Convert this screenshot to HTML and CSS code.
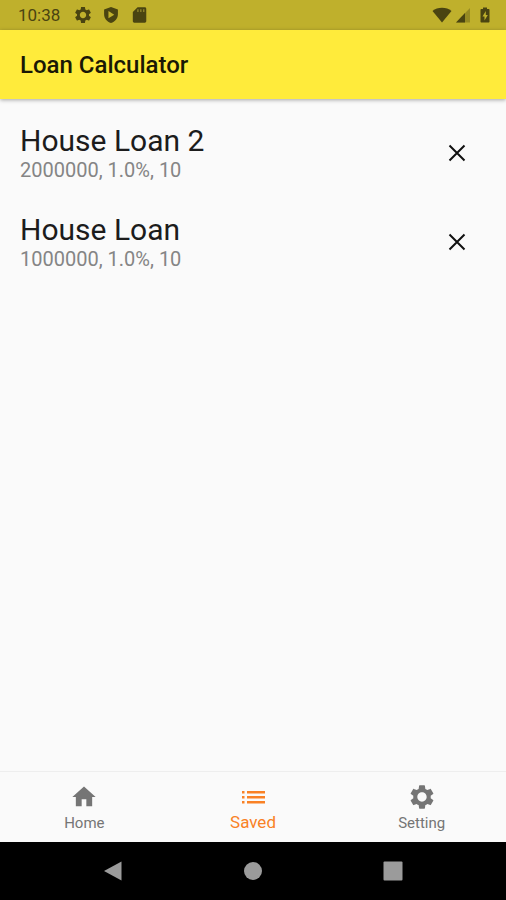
FILE: index.html
```html
<!DOCTYPE html>
<html lang="en">
<head>
    <meta charset="UTF-8">
    <meta name="viewport" content="width=device-width, initial-scale=1.0">
    <title>Loan Calculator</title>
    <link rel="stylesheet" href="styles.css">
</head>
<body>

<div class="status-bar">
    <div class="status-left">
        <span class="clock">10:38</span>
        <svg class="status-icon" viewBox="2 2 20 20"><use href="#gear"/></svg>
        <svg class="status-icon" viewBox="1 1 22 22"><path fill-rule="evenodd" d="M12 1L2.500 4.500V11c0 5.600 4 10.500 9.500 12 5.500-1.500 9.500-6.400 9.500-12V4.500L12 1zM8.500 6.500l8 5-8 5z"/></svg>
        <svg class="status-icon" viewBox="1 1 22 22"><path d="M20 1.500H10L3.500 8v12.500c0 1.100.9 2 2 2H20c1.100 0 2-.9 2-2v-17c0-1.100-.9-2-2-2z"/><path fill="#8c812a" d="M9.500 4h2v4h-2zm4 0h2v4h-2zm4 0h2v4h-2z"/></svg>
    </div>
    <div class="status-right">
        <svg class="wifi" viewBox="0 0 20 16"><path d="M10 15.500L.5 4C3 2 6.300.8 10 .8S17 2 19.500 4z"/></svg>
        <svg class="signal" viewBox="0 0 16 16"><path opacity=".35" d="M1 15.500L15 1v14.500z"/><path d="M1 15.500L10 6v9.500z"/></svg>
        <svg class="battery" viewBox="0 0 10 16"><path fill-rule="evenodd" d="M3 .5h4V2h1.500c.6 0 1 .4 1 1v11.500c0 .6-.4 1-1 1h-7c-.6 0-1-.4-1-1V3c0-.6.400-1 1-1H3zM5.800 4L2.500 9.500h2v4L7.800 8h-2z"/></svg>
    </div>
</div>

<header class="app-bar">
    <h1>Loan Calculator</h1>
</header>

<main class="loan-list">
    <div class="loan">
        <div class="loan-info">
            <h2>House Loan 2</h2>
            <p>2000000, 1.0%, 10</p>
        </div>
        <button class="delete" aria-label="Delete House Loan 2">
            <svg viewBox="0 0 18 18"><path d="M1.500 1.500l15 15M16.500 1.500l-15 15"/></svg>
        </button>
    </div>
    <div class="loan">
        <div class="loan-info">
            <h2>House Loan</h2>
            <p>1000000, 1.0%, 10</p>
        </div>
        <button class="delete" aria-label="Delete House Loan">
            <svg viewBox="0 0 18 18"><path d="M1.500 1.500l15 15M16.500 1.500l-15 15"/></svg>
        </button>
    </div>
</main>

<nav class="tabs">
    <a class="tab" href="#home">
        <svg viewBox="0 0 24 24"><path d="M10 20v-6h4v6h5v-8h3L12 3 2 12h3v8z"/></svg>
        <span>Home</span>
    </a>
    <a class="tab active" href="#saved">
        <svg viewBox="0 0 28 28"><path d="M3 8h2.500v2.500H3zm0 5h2.500v2.500H3zm0 5h2.500v2.500H3zM8 8h18v2.500H8zm0 5h18v2.500H8zm0 5h18v2.500H8z"/></svg>
        <span>Saved</span>
    </a>
    <a class="tab" href="#setting">
        <svg viewBox="0 0 24 24"><path id="gear" d="M19.430 12.980c.04-.32.07-.64.07-.98s-.03-.66-.07-.98l2.110-1.650c.19-.15.24-.42.12-.64l-2-3.460c-.12-.22-.39-.3-.61-.22l-2.490 1c-.52-.4-1.080-.73-1.690-.98l-.38-2.650C14.460 2.180 14.250 2 14 2h-4c-.25 0-.46.18-.49.42l-.38 2.650c-.61.25-1.170.59-1.690.98l-2.490-1c-.23-.09-.49 0-.61.22l-2 3.460c-.13.22-.07.49.12.64l2.110 1.650c-.04.32-.07.65-.07.98s.03.66.07.98l-2.110 1.650c-.19.15-.24.42-.12.64l2 3.460c.12.22.39.3.61.22l2.490-1c.52.4 1.080.73 1.690.98l.38 2.650c.03.24.24.42.49.42h4c.25 0 .46-.18.49-.42l.38-2.650c.61-.25 1.170-.59 1.690-.98l2.490 1c.23.09.49 0 .61-.22l2-3.460c.12-.22.07-.49-.12-.64l-2.110-1.650zM12 16c-2.200 0-4-1.800-4-4s1.800-4 4-4 4 1.800 4 4-1.800 4-4 4z"/></svg>
        <span>Setting</span>
    </a>
</nav>

<div class="system-nav">
    <button aria-label="Back"><svg viewBox="0 0 20 20"><path d="M1 10L18.500.500v19z"/></svg></button>
    <button aria-label="Home screen"><svg viewBox="0 0 20 20"><circle cx="10" cy="10" r="9"/></svg></button>
    <button aria-label="Recent apps"><svg viewBox="0 0 20 20"><rect x="0.500" y="0.500" width="19" height="19" rx="1"/></svg></button>
</div>

</body>
</html>
```

FILE: styles.css
```css
* {
    box-sizing: border-box;
}
body {
    margin: 0;
    min-height: 100vh;
    display: flex;
    flex-direction: column;
    font-family: Roboto, sans-serif;
    background-color: #fafafa;
    color: #1c1c1c;
}
h1, h2, p {
    margin: 0;
}
svg {
    display: block;
    fill: currentColor;
}
button {
    padding: 0;
    border: none;
    background: none;
    color: inherit;
    cursor: pointer;
}

/* status bar */
.status-bar {
    display: flex;
    justify-content: space-between;
    height: 30px;
    padding: 0 16px 0 18px;
    background-color: #bfb02c;
    color: #4a4411;
}
.status-left {
    display: flex;
    align-items: center;
    gap: 12px;
}
.clock {
    margin-right: 3px;
    font-size: 17px;
    line-height: 30px;
}
.status-icon {
    width: 16px;
    height: 16px;
}
.status-right {
    display: flex;
    align-items: center;
    gap: 3px;
}
.wifi {
    width: 20px;
    height: 16px;
}
.signal {
    width: 16px;
    height: 16px;
}
.battery {
    width: 10px;
    height: 16px;
    margin-left: 6px;
}

/* title bar */
.app-bar {
    display: flex;
    align-items: center;
    height: 69px;
    padding: 0 20px;
    background-color: #ffeb3b;
    box-shadow: 0 1px 4px rgba(0, 0, 0, 0.35);
}
.app-bar h1 {
    font-size: 24px;
    font-weight: 500;
    line-height: 32px;
    color: #1a1805;
}

/* saved loans */
.loan-list {
    flex: 1;
    padding: 9px 20px;
}
.loan {
    display: flex;
    align-items: center;
    justify-content: space-between;
    padding: 15px 0;
}
.loan-info h2 {
    font-size: 30px;
    font-weight: 400;
    line-height: 36px;
}
.loan-info p {
    font-size: 20px;
    line-height: 23px;
    color: #858585;
}
.delete {
    display: flex;
    align-items: center;
    justify-content: center;
    width: 58px;
    height: 58px;
}
.delete svg {
    width: 18px;
    height: 18px;
    fill: none;
    stroke: #111;
    stroke-width: 2;
}

/* bottom tabs */
.tabs {
    display: flex;
    height: 71px;
    border-top: 1px solid #eee;
}
.tab {
    flex: 1;
    display: flex;
    flex-direction: column;
    align-items: center;
    padding-top: 11px;
    font-size: 15px;
    line-height: 24px;
    color: #757575;
    text-decoration: none;
}
.tab svg {
    width: 28px;
    height: 28px;
}
.tab.active {
    font-size: 17px;
    line-height: 22px;
    color: #f98125;
}

/* system navigation */
.system-nav {
    display: flex;
    justify-content: center;
    height: 58px;
    background-color: #000;
    color: #9b9b9b;
}
.system-nav button {
    display: flex;
    align-items: center;
    justify-content: center;
    width: 140px;
}
.system-nav svg {
    width: 20px;
    height: 20px;
}
```
